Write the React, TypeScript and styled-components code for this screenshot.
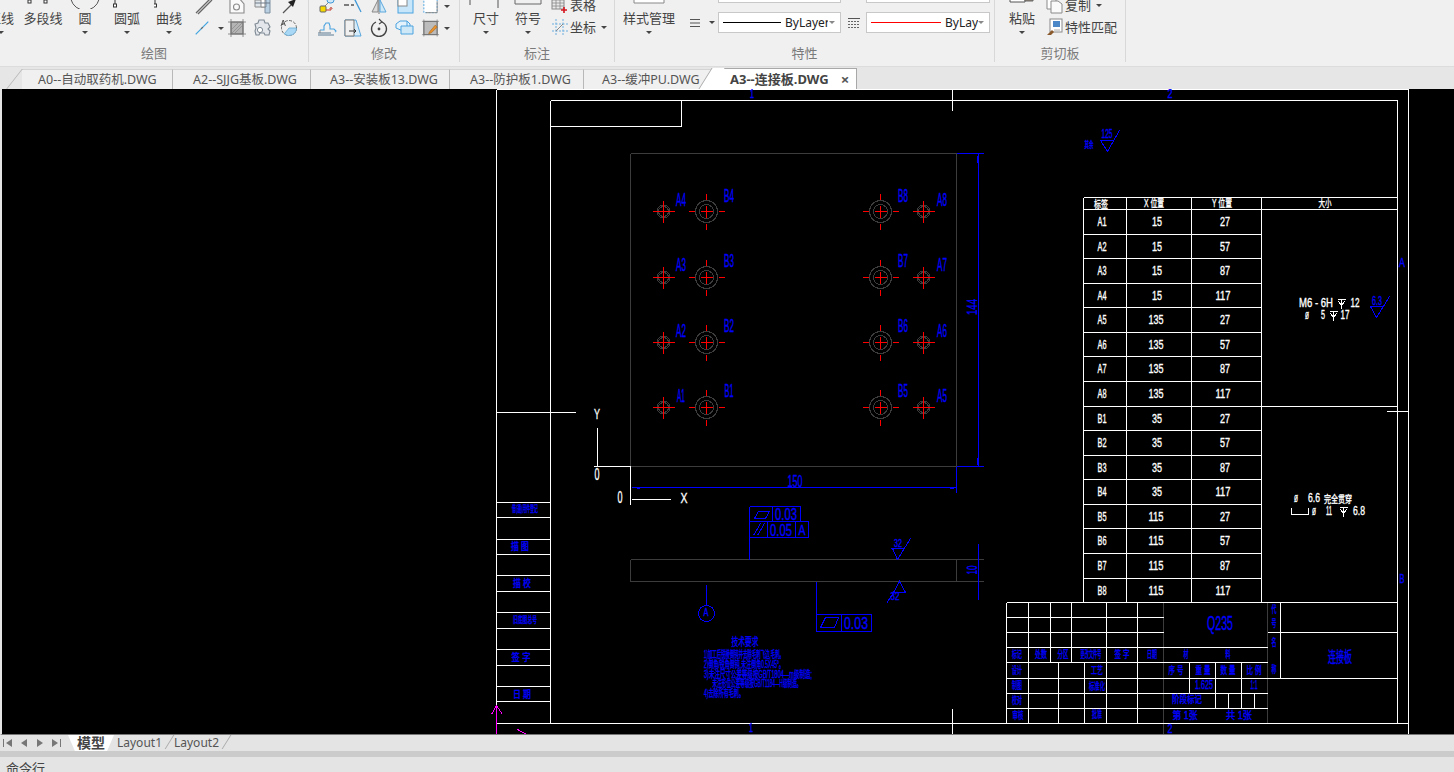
import * as React from "react";
import styled, { createGlobalStyle } from "styled-components";

const UI_FONT = `"Noto Sans", "Noto Sans CJK SC", sans-serif`;
const CAD_FONT = `"Liberation Sans", "Noto Sans CJK SC", sans-serif`;
const BLUE = "#0000ff";
const WHITE = "#ffffff";
const RED = "#ff0000";
const GREY = "#3c3c3c";

const GlobalStyle = createGlobalStyle`
  html, body, #root {
    margin: 0;
    padding: 0;
    height: 100%;
    overflow: hidden;
    background: #f0f0f0;
  }
`;

const Page = styled.div`
  height: 772px;
  width: 1454px;
  display: flex;
  flex-direction: column;
  overflow: hidden;
  font-family: ${UI_FONT};
  color: #444;
`;

/* ---------- ribbon ---------- */

const Ribbon = styled.div`
  height: 66px;
  flex: none;
  display: flex;
  background: #f0f0f0;
  overflow: hidden;
  border-bottom: 1px solid #dcdcdc;
  box-sizing: content-box;
`;

const Group = styled.div<{ $w: number }>`
  width: ${(p) => p.$w}px;
  height: 62px;
  flex: none;
  box-sizing: border-box;
  display: flex;
  flex-direction: column;
  border-right: 1px solid #d8d8d8;
`;

const Tools = styled.div<{ $pad?: number }>`
  height: 50px;
  margin-top: -6px;
  flex: none;
  display: flex;
  padding-left: ${(p) => p.$pad ?? 0}px;
`;

const GroupLabel = styled.div`
  height: 18px;
  line-height: 18px;
  text-align: center;
  font-size: 13px;
  color: #7a7a7a;
`;

const CroppedRun = styled.div`
  display: flex;
  flex: none;
  margin-left: -20px;
`;

const LargeButton = styled.div<{ $w?: number }>`
  width: ${(p) => p.$w ?? 42}px;
  flex: none;
  display: flex;
  flex-direction: column;
  align-items: center;
`;

const LargeIcon = styled.div`
  height: 15px;
  width: 100%;
  overflow: hidden;
  display: flex;
  justify-content: center;
  align-items: flex-end;
`;

const LargeText = styled.div`
  height: 18px;
  line-height: 18px;
  font-size: 13px;
  white-space: nowrap;
  color: #444;
`;

const Caret = styled.span`
  display: inline-block;
  width: 0;
  height: 0;
  border-left: 3px solid transparent;
  border-right: 3px solid transparent;
  border-top: 3px solid #444;
  flex: none;
`;

const LargeCaret = styled(Caret)`
  margin-top: 4px;
`;

const SmallGrid = styled.div<{ $cols: string }>`
  display: grid;
  grid-template-columns: ${(p) => p.$cols};
  grid-auto-rows: 22px;
  margin-top: 1px;
`;

const SmallCell = styled.div`
  display: flex;
  align-items: center;
  justify-content: center;
`;

const CaretCell = styled(SmallCell)<{ $gap: number }>`
  justify-content: flex-start;
  gap: ${(p) => p.$gap}px;
  padding-left: 3px;
`;

const TextRows = styled.div<{ $left: number }>`
  display: flex;
  flex-direction: column;
  margin-left: ${(p) => p.$left}px;
`;

const TextRow = styled.div`
  height: 22px;
  display: flex;
  align-items: center;
  font-size: 13px;
  line-height: 22px;
  white-space: nowrap;
  color: #444;
`;

const RowIcon = styled.span`
  width: 19px;
  flex: none;
  display: flex;
  align-items: center;
`;

const RowCaret = styled(Caret)`
  margin-left: 5px;
`;

const PropsGrid = styled.div`
  display: grid;
  grid-template-columns: 23px 12px 124px 24px 125px;
  grid-template-rows: 21px 21px;
  row-gap: 9px;
  margin-top: -12px;
  flex: none;
  align-items: center;
`;

const Combo = styled.div`
  height: 21px;
  box-sizing: border-box;
  background: #fff;
  border: 1px solid #c8c8c8;
  display: flex;
  align-items: center;
  padding: 0 4px;
  overflow: hidden;
  margin-right: 1px;
`;

const ComboLine = styled.span<{ $w: number; $color: string }>`
  width: ${(p) => p.$w}px;
  height: 1px;
  flex: none;
  background: ${(p) => p.$color};
`;

const ComboText = styled.span<{ $w: number }>`
  width: ${(p) => p.$w}px;
  flex: none;
  overflow: hidden;
  margin-left: 4px;
  font-size: 12px;
  color: #222;
  white-space: nowrap;
`;

const ComboCaret = styled(Caret)`
  border-top-color: #888;
  margin-left: auto;
  margin-right: 1px;
`;

/* ---------- file tabs ---------- */

const TabBar = styled.div`
  height: 22px;
  flex: none;
  background: #e6e6e6;
  display: flex;
  align-items: flex-end;
  padding-left: 22px;
  position: relative;
  &::before {
    content: "";
    position: absolute;
    left: 14px;
    top: 2px;
    width: 8px;
    height: 20px;
    border-left: 1px solid #b8b8b8;
    transform: skewX(-38deg);
  }
`;

const Tab = styled.div<{ $w: number; $pad: number }>`
  width: ${(p) => p.$w}px;
  height: 20px;
  flex: none;
  box-sizing: border-box;
  background: #f0f0f0;
  border-right: 1px solid #b8b8b8;
  border-top: 1px solid #d4d4d4;
  padding-left: ${(p) => p.$pad}px;
  font-size: 12.5px;
  line-height: 19px;
  color: #555;
  white-space: nowrap;
`;

const ActiveTab = styled.div`
  width: 146px;
  height: 21px;
  flex: none;
  box-sizing: border-box;
  position: relative;
  background: #fff;
  border-top: 1px solid #a8a8a8;
  border-right: 1px solid #a8a8a8;
  padding-left: 19px;
  font-size: 13px;
  font-weight: 700;
  line-height: 20px;
  color: #444;
  white-space: nowrap;
  display: flex;
  &::before {
    content: "";
    position: absolute;
    left: -6px;
    top: -1px;
    width: 12px;
    height: 21px;
    background: #fff;
    border-left: 1px solid #a8a8a8;
    transform: skewX(-32deg);
  }
`;

const TabLabel = styled.span`
  position: relative;
`;

const TabClose = styled.span`
  margin-left: 12px;
  font-size: 15px;
  font-weight: 700;
  color: #555;
`;

/* ---------- canvas ---------- */

const Canvas = styled.div`
  height: 646px;
  flex: none;
  background: #000;
  border-left: 2px solid #e4e4e4;
  border-bottom: 1px solid #777;
  box-sizing: border-box;
  overflow: hidden;
`;

const Drawing = styled.svg`
  display: block;
  margin-left: -2px;
  shape-rendering: crispEdges;
`;

/* ---------- layout tabs + command line ---------- */

const LayoutBar = styled.div`
  height: 16px;
  flex: none;
  background: #e4e4e4;
  display: flex;
  align-items: stretch;
`;

const NavArrows = styled.div`
  width: 68px;
  flex: none;
  display: flex;
  align-items: center;
`;

const ModelTab = styled.div`
  width: 46px;
  flex: none;
  background: #fff;
  clip-path: polygon(0 0, 100% 0, 85% 100%, 15% 100%);
  text-align: center;
  font-size: 14px;
  font-weight: 700;
  line-height: 15px;
  color: #444;
`;

const SheetTab = styled.div`
  width: 57px;
  flex: none;
  box-sizing: border-box;
  padding-right: 6px;
  position: relative;
  text-align: center;
  font-size: 12px;
  line-height: 15px;
  color: #555;
  &::after {
    content: "";
    position: absolute;
    right: 1px;
    top: 0;
    height: 14px;
    border-right: 1px solid #aaa;
    transform: skewX(-32deg);
  }
`;

const Gutter = styled.div`
  height: 6px;
  flex: none;
  background: #cbcbcb;
`;

const CommandRow = styled.div`
  height: 15px;
  flex: none;
  background: #e4e4e4;
  padding-left: 6px;
  font-size: 13px;
  line-height: 22px;
  color: #444;
  overflow: hidden;
`;

/* ---------- ribbon icons ---------- */

const Ic: React.FC<{ w?: number; h?: number; vb?: string; children: React.ReactNode }> = ({
  w = 20,
  h = 20,
  vb,
  children,
}) => (
  <svg width={w} height={h} viewBox={vb ?? `0 0 ${w} ${h}`} fill="none">
    {children}
  </svg>
);

const IconHatchLine = () => (
  <Ic>
    <path d="M3 17 17 3M5 18 19 4" stroke="#666" strokeWidth="1.3" />
    <path d="M4 17.5 18 3.5" stroke="#aaa" strokeWidth="1" />
  </Ic>
);
const IconBlueLine = () => (
  <Ic>
    <path d="M3 17 17 3" stroke="#3fa3e0" strokeWidth="1.3" />
    <path d="M9 11l2-2" stroke="#666" strokeWidth="1.3" />
  </Ic>
);
const IconGem = () => (
  <Ic>
    <path d="M3 2h9l5 6v9H3z" stroke="#8a8a8a" strokeWidth="1.1" fill="#fafafa" />
    <circle cx="9.5" cy="11" r="3" stroke="#8a8a8a" strokeWidth="1.1" />
  </Ic>
);
const IconBlocks = () => (
  <Ic>
    <path d="M2 4h12v7H2z" stroke="#8a8a8a" fill="#dfe6ec" />
    <path d="M8 3h4v8H8z" fill="#fff" stroke="#8a8a8a" />
    <path d="M13 3h4v14h-5v-6h1z" fill="#b9cfe2" stroke="#7c8f9f" />
    <path d="M2 7h15" stroke="#6d7b88" />
  </Ic>
);
const IconArrow = () => (
  <Ic>
    <path d="M4 17 13 8" stroke="#555" strokeWidth="1.2" />
    <path d="M9 6l8-3-3 8z" fill="#222" />
  </Ic>
);
const IconHatchSquare = () => (
  <Ic>
    <rect x="4" y="4" width="12" height="12" fill="#b4b4b4" stroke="#666" />
    <path d="M1 4h18M1 16h18M4 1v18M16 1v18" stroke="#777" strokeWidth="0.8" />
    <path d="M5 15 15 5M8 15l7-7M5 11l6-6" stroke="#8d8d8d" strokeWidth="0.8" />
  </Ic>
);
const IconGear = () => (
  <Ic>
    <path
      d="M6 2h5l1 3 3 0 2 4-2 2 2 2-1 4h-4l-1-2H7l-1 2H3l-1-4 1-3-1-4 3-1z"
      fill="#e3e6ea"
      stroke="#7f8a94"
      strokeWidth="1.1"
    />
    <circle cx="7" cy="12" r="2.6" fill="#fff" stroke="#7f8a94" />
  </Ic>
);
const IconArcA = () => (
  <Ic>
    <circle cx="10" cy="10" r="7.5" stroke="#666" strokeDasharray="3 1.4" />
    <path d="M10 10h7.5a7.5 7.5 0 0 1-12.2 5.9z" fill="#a8d8f5" stroke="#6aa9d1" strokeWidth="0.8" />
    <path d="M2 8 4.2 2 6.4 8M3 6h2.4" stroke="#444" strokeWidth="0.9" />
  </Ic>
);
const IconDots = () => (
  <Ic>
    <path d="M11 7 7 11" stroke="#888" />
    <rect x="10" y="1" width="7" height="6" rx="3" fill="#cfe8f8" stroke="#3f98d8" />
    <rect x="3" y="10" width="6" height="6" rx="1" fill="#f5d800" stroke="#666" />
    <path d="M9 14h5v-2" stroke="#c0392b" />
    <path d="M12.5 13l1.5-2 1.5 2" stroke="#c0392b" strokeWidth="0.7" />
  </Ic>
);
const IconTrim = () => (
  <Ic>
    <path d="M1 9h5M8 9h3" stroke="#555" strokeWidth="1.5" />
    <path d="M11 2l7 14" stroke="#3f98d8" strokeWidth="1.3" />
  </Ic>
);
const IconMirror = () => (
  <Ic>
    <path d="M10 1v17" stroke="#888" strokeWidth="1.2" />
    <path d="M9 4 3 16h6z" fill="#dcdcdc" stroke="#888" />
    <path d="M11 4l6 12h-6z" fill="#cfe8f8" stroke="#5aa7dc" />
  </Ic>
);
const IconDoc = () => (
  <Ic>
    <rect x="3" y="2" width="15" height="15" fill="#c7e6fa" stroke="#4aa3df" />
    <rect x="3" y="2" width="9" height="8" fill="#fff" stroke="#888" />
  </Ic>
);
const IconDash = () => (
  <Ic>
    <rect x="3" y="3" width="14" height="14" fill="#fff" stroke="#4aa3df" strokeDasharray="2 1.5" />
    <path d="M5 17h12V5" stroke="#888" />
  </Ic>
);
const IconStretch = () => (
  <Ic>
    <path d="M1 15h13M1 17h16" stroke="#5a7a92" />
    <path d="M3 12h4V8l2-3h3l1 3v3h4l2 2-1 1" stroke="#4aa3df" strokeWidth="1.1" />
    <path d="M3 12v3" stroke="#888" />
  </Ic>
);
const IconScale = () => (
  <Ic>
    <path d="M2 2h11l5 16H2z" fill="#d7ecfa" stroke="#5aa7dc" />
    <path d="M2 2h9v16H2z" fill="#f0f0f0" stroke="#777" />
    <path d="M6 13h7M11 11l2 2-2 2" stroke="#333" />
  </Ic>
);
const IconRotate = () => (
  <Ic>
    <path d="M7 4a7.5 7.5 0 1 0 6 0" stroke="#444" strokeWidth="1.3" />
    <path d="M10 1 13 4l-3 2" stroke="#444" strokeWidth="1.1" />
    <circle cx="10" cy="11" r="1.4" fill="#444" />
  </Ic>
);
const IconCube = () => (
  <Ic>
    <path d="M1 6l4-3h7l3 3v7H8L1 10z" fill="#e4f2fb" stroke="#4aa3df" />
    <path d="M6 8h12v8H6z" fill="#cfe8f8" stroke="#4aa3df" />
    <path d="M12 8V3" stroke="#4aa3df" />
  </Ic>
);
const IconHatchPen = () => (
  <Ic>
    <rect x="3" y="3" width="14" height="14" fill="#bcbcbc" stroke="#666" />
    <path d="M1 3h18M1 17h18M3 1v18M17 1v18" stroke="#777" strokeWidth="0.7" />
    <path d="M9 14l6-7 2 2-6 6-3 1z" fill="#e8912d" stroke="#a3651c" strokeWidth="0.6" />
  </Ic>
);
const IconTable = () => (
  <Ic w={18} h={18}>
    <rect x="1" y="1" width="12" height="12" fill="#e9e9e9" stroke="#888" />
    <path d="M1 4h12M1 7h12M1 10h12M5 1v12M9 1v12" stroke="#888" strokeWidth="0.8" />
    <path d="M13 11v6M10 14h6" stroke="#d4141e" strokeWidth="1.6" />
  </Ic>
);
const IconCoord = () => (
  <Ic w={18} h={18}>
    <path d="M5 1v16M12 1v16M1 6h16M1 13h16" stroke="#6aaede" strokeDasharray="2 1.5" />
    <path d="M5 13 12 6" stroke="#888" />
  </Ic>
);
const IconLineWeight = () => (
  <Ic w={12} h={12}>
    <path d="M1 2.5h10M1 6h10M1 9.5h10" stroke="#555" strokeWidth="1.1" />
  </Ic>
);
const IconLineType = () => (
  <Ic w={14} h={12}>
    <path d="M1 1.5h12" stroke="#555" />
    <path d="M1 4.5h12M1 7.5h12M1 10.5h12" stroke="#666" strokeDasharray="2 1" />
  </Ic>
);
const IconCopy = () => (
  <Ic w={18} h={18}>
    <path d="M1 1h9v12H1z" fill="#fff" stroke="#8a8a8a" />
    <path d="M5 5h7l4 3v9H5z" fill="#fafafa" stroke="#8a8a8a" />
  </Ic>
);
const IconMatch = () => (
  <Ic w={18} h={18}>
    <rect x="4" y="1" width="12" height="13" fill="#fff" stroke="#888" />
    <rect x="7" y="3" width="7" height="6" fill="#4c88c8" />
    <path d="M1 17l5-5 2 2-3 3z" fill="#8a5a2c" />
    <path d="M8 12h6" stroke="#aaa" />
  </Ic>
);

/* the large icons stick out of the top of the shot, only their lower edge shows */
const TopOfCircle = () => (
  <svg width="30" height="12" viewBox="0 0 30 12" fill="none">
    <path d="M1 0a14.5 14.5 0 0 0 28 0" stroke="#555" strokeWidth="1" transform="translate(0 2.5)" />
  </svg>
);
const PolyGrips = () => (
  <svg width="32" height="10" viewBox="0 0 32 10" fill="none">
    <rect x="1" y="1" width="3" height="3" fill="#fff" stroke="#333" />
    <rect x="17" y="1" width="3" height="3" fill="#fff" stroke="#333" />
  </svg>
);
const GripBelow = ({ dx }: { dx: number }) => (
  <svg width="30" height="10" viewBox="0 0 30 10" fill="none">
    <path d={`M${15 + dx} 0v5`} stroke="#333" />
    <rect x={13.5 + dx} y="5" width="3" height="3" fill="#fff" stroke="#333" />
  </svg>
);
const DimStub = () => (
  <svg width="34" height="10" viewBox="0 0 34 10" fill="none">
    <path d="M1 0v6M29 0v9" stroke="#555" />
  </svg>
);
const SymbolStub = () => (
  <svg width="34" height="10" viewBox="0 0 34 10" fill="none">
    <path d="M4 0v5h26V0" stroke="#666" />
  </svg>
);
const StyleStub = () => (
  <svg width="32" height="12" viewBox="0 0 32 12" fill="none">
    <path d="M1 0v6h30V0" stroke="#888" fill="#fff" />
    <path d="M6 2h20" stroke="#6aaede" />
  </svg>
);
const PasteStub = () => (
  <svg width="26" height="13" viewBox="0 0 26 13" fill="none">
    <path d="M1 0v6h15V0" stroke="#555" fill="#fff" />
    <path d="M16 0h8v5h-8z" fill="#8d8272" stroke="#666" />
  </svg>
);

/* ---------- drawing data ---------- */

type Seg = [number, number, number, number];

const toPath = (segs: Seg[]) => segs.map(([a, b, c, d]) => `M${a} ${b}L${c} ${d}`).join("");

const TABLE_ROWS = [197, 209, 234, 258, 283, 307, 332, 356, 381, 406, 430, 455, 479, 504, 528, 553, 578];
const TABLE_DATA: [string, string, string][] = [
  ["A1", "15", "27"],
  ["A2", "15", "57"],
  ["A3", "15", "87"],
  ["A4", "15", "117"],
  ["A5", "135", "27"],
  ["A6", "135", "57"],
  ["A7", "135", "87"],
  ["A8", "135", "117"],
  ["B1", "35", "27"],
  ["B2", "35", "57"],
  ["B3", "35", "87"],
  ["B4", "35", "117"],
  ["B5", "115", "27"],
  ["B6", "115", "57"],
  ["B7", "115", "87"],
  ["B8", "115", "117"],
];

const whiteSegs: Seg[] = [
  // sheet borders
  [496, 89, 1408, 89],
  [496, 89, 496, 735],
  [1408, 89, 1408, 735],
  [550, 100, 1397, 100],
  [550, 100, 550, 723],
  [1397, 100, 1397, 723],
  [550, 723, 1408, 723],
  [496, 723, 550, 723],
  [550, 126, 681, 126],
  [681, 100, 681, 126],
  // centring ticks
  [952, 89, 952, 110],
  [952, 708, 952, 735],
  [496, 412, 575, 412],
  [1386, 411, 1408, 411],
  // ucs icons
  [597, 427, 597, 466],
  [593, 466, 630, 466],
  [630, 466, 630, 504],
  [631, 499, 670, 499],
  // revision column
  ...[502, 517, 539, 554, 575, 591, 612, 628, 649, 665, 686, 701].map((y): Seg => [496, y, 550, y]),
  // hole table
  ...TABLE_ROWS.map((y): Seg => [1083, y, 1261, y]),
  [1261, 197, 1397, 197],
  [1261, 209, 1397, 209],
  [1261, 406, 1397, 406],
  [1083, 197, 1083, 602],
  [1126, 197, 1126, 602],
  [1191, 197, 1191, 602],
  [1261, 197, 1261, 602],
  // title block
  [1006, 602, 1397, 602],
  [1006, 602, 1006, 723],
  [1006, 617, 1163, 617],
  [1006, 632, 1163, 632],
  [1267, 632, 1397, 632],
  [1006, 647, 1267, 647],
  [1006, 662, 1267, 662],
  [1006, 678, 1397, 678],
  [1006, 693, 1267, 693],
  [1006, 708, 1267, 708],
  [1028, 602, 1028, 723],
  [1050, 602, 1050, 662],
  [1071, 602, 1071, 662],
  [1106, 602, 1106, 723],
  [1137, 602, 1137, 723],
  [1058, 662, 1058, 723],
  [1084, 662, 1084, 723],
  [1189, 662, 1189, 693],
  [1215, 662, 1215, 708],
  [1241, 662, 1241, 693],
  [1228, 693, 1228, 708],
  [1241, 693, 1241, 708],
  [1254, 693, 1254, 708],
  [1280, 602, 1280, 678],
  // counterbore bracket
  [1291, 507, 1291, 514],
  [1291, 514, 1308, 514],
  [1308, 507, 1308, 514],
];

const greySegs: Seg[] = [
  [630, 153, 956, 153],
  [630, 153, 630, 466],
  [956, 153, 956, 466],
  [630, 466, 956, 466],
  [630, 559, 956, 559],
  [630, 581, 956, 581],
  [630, 559, 630, 581],
  [956, 559, 956, 581],
  [956, 559, 983, 559],
  [956, 581, 983, 581],
  [1163, 602, 1163, 733],
  [1267, 602, 1267, 723],
];

const blueSegs: Seg[] = [
  // dimensions
  [956, 153, 983, 153],
  [956, 466, 983, 466],
  [978, 153, 978, 466],
  [977, 155, 977, 162],
  [977, 457, 977, 464],
  [631, 487, 956, 487],
  [636, 488, 639, 488],
  [949, 488, 953, 488],
  [956, 466, 956, 492],
  [978, 543, 978, 599],
  // geometric tolerance frames
  [749, 506, 800, 506],
  [749, 521, 808, 521],
  [749, 537, 808, 537],
  [749, 506, 749, 559],
  [772, 506, 772, 521],
  [800, 506, 800, 521],
  [767, 521, 767, 537],
  [795, 521, 795, 537],
  [808, 521, 808, 537],
  [816, 581, 816, 631],
  [816, 614, 871, 614],
  [816, 631, 871, 631],
  [841, 614, 841, 631],
  [871, 614, 871, 631],
  [706, 584, 706, 605],
];

const blueShapes = [
  // flatness and parallel symbols
  "M754 518L765 518L769 511L758 511Z",
  "M753 535L760 523M757 535L764 523",
  "M820 627L834 627L838 617L825 617Z",
  // roughness marks
  "M890 548L904 548M892 548L897 559L910 538",
  "M893 592L905 592M905 592L899 581L893 592L886 603",
  "M1100 140L1113 140M1100 140L1107 151L1119 130",
  "M1370 306L1383 306M1370 306L1376 317L1389 296",
];

const holeRows = [211, 277, 342, 407];
const holeCols: [number, boolean][] = [
  [663, false],
  [706, true],
  [880, true],
  [923, false],
];

const Hole: React.FC<{ cx: number; cy: number; big: boolean }> = ({ cx, cy, big }) => {
  const stroke = GREY;
  const red = big
    ? `M${cx - 18} ${cy}H${cx - 12}M${cx - 6} ${cy}H${cx + 6}M${cx + 12} ${cy}H${cx + 18}` +
      `M${cx} ${cy - 18}V${cy - 12}M${cx} ${cy - 6}V${cy + 6}M${cx} ${cy + 12}V${cy + 18}`
    : `M${cx - 11} ${cy}H${cx + 11}M${cx} ${cy - 11}V${cy + 11}`;
  return (
    <g>
      <circle cx={cx} cy={cy} r={big ? 11 : 6.5} stroke={stroke} fill="none" />
      <circle cx={cx} cy={cy} r={big ? 7 : 5} stroke={stroke} fill="none" />
      <path d={red} stroke={RED} fill="none" />
    </g>
  );
};

/* text on the drawing: centre point, squeezed width, font size */
type Label = [string, number, number, number, number];

const CadText = styled.text`
  font-family: ${CAD_FONT};
  text-anchor: middle;
  dominant-baseline: central;
  shape-rendering: auto;
  stroke-width: 0.35px;
`;

const blueLabels: Label[] = [
  ["A4", 681, 200, 10, 18],
  ["A3", 681, 265, 10, 18],
  ["A2", 681, 331, 10, 18],
  ["A1", 681, 396, 8, 18],
  ["B4", 729, 196, 10, 18],
  ["B3", 729, 261, 10, 18],
  ["B2", 729, 326, 10, 18],
  ["B1", 729, 391, 9, 18],
  ["B8", 903, 196, 10, 18],
  ["B7", 903, 261, 10, 18],
  ["B6", 903, 326, 10, 18],
  ["B5", 903, 391, 10, 18],
  ["A8", 942, 200, 10, 18],
  ["A7", 942, 265, 10, 18],
  ["A6", 942, 331, 10, 18],
  ["A5", 942, 396, 10, 18],
  ["1", 752, 94, 4, 12],
  ["1", 751, 728, 4, 12],
  ["2", 1170, 94, 5, 12],
  ["2", 1170, 729, 5, 12],
  ["A", 1402, 262, 6, 13],
  ["B", 1402, 578, 5, 13],
  ["150", 795, 481, 15, 16],
  ["0.03", 786, 514, 22, 16],
  ["0.05", 781, 530, 22, 16],
  ["A", 802, 530, 7, 14],
  ["0.03", 856, 623, 24, 16],
  ["A", 706, 612, 5, 10],
  ["32", 898, 543, 8, 11],
  ["32", 895, 596, 9, 11],
  ["125", 1107, 134, 11, 12],
  ["其余", 1089, 145, 9, 9],
  ["6.3", 1377, 301, 10, 12],
  ["技术要求", 745, 642, 27, 11],
  ["1)加工后锐棱倒钝并去除毛刺飞边,毛刺。", 744, 654, 80, 10],
  ["2)倒角/锐角倒钝,未注倒角0.5X45°。", 744, 664, 80, 10],
  ["3)未注尺寸公差等级按GB/T1804—m级制造;", 758, 674, 108, 10],
  ["未注形位公差等级按GB/T1184—H级制造。", 757, 683, 89, 10],
  ["4)去除所有毛刺。", 724, 693, 40, 10],
  ["借(通)用件登记", 525, 509, 26, 9],
  ["描  图", 520, 546, 18, 10],
  ["描  校", 522, 583, 18, 10],
  ["旧底图总号", 525, 620, 24, 9],
  ["签  字", 521, 657, 19, 10],
  ["日  期", 522, 694, 18, 10],
  ["标记", 1017, 654, 10, 10],
  ["处数", 1041, 654, 12, 10],
  ["分区", 1063, 654, 11, 10],
  ["更改文件号", 1091, 654, 21, 10],
  ["签  字", 1122, 654, 15, 10],
  ["日期", 1152, 654, 10, 10],
  ["材", 1186, 654, 5, 10],
  ["料", 1228, 654, 5, 10],
  ["设计", 1017, 670, 10, 10],
  ["工艺", 1097, 670, 12, 10],
  ["序  号", 1176, 670, 15, 10],
  ["重  量", 1203, 670, 15, 10],
  ["数  量", 1228, 670, 15, 10],
  ["比  例", 1254, 670, 15, 10],
  ["制图", 1017, 685, 10, 10],
  ["标准化", 1097, 686, 16, 10],
  ["1.625", 1204, 685, 18, 12],
  ["1:1", 1254, 685, 7, 12],
  ["校对", 1017, 700, 10, 10],
  ["阶段标记", 1187, 699, 30, 10],
  ["审核", 1018, 715, 11, 10],
  ["批准", 1097, 714, 10, 10],
  ["第  1张", 1185, 715, 25, 10],
  ["共  1张", 1239, 715, 26, 10],
  ["Q235", 1220, 623, 26, 20],
  ["连接板", 1340, 656, 24, 15],
  ["代", 1274, 609, 5, 10],
  ["号", 1274, 623, 5, 10],
  ["名", 1274, 642, 5, 10],
  ["称", 1274, 669, 5, 10],
];

const whiteLabels: Label[] = [
  ["Y", 597, 413, 6, 15],
  ["0", 597, 474, 5, 16],
  ["0", 620, 497, 5, 16],
  ["X", 684, 497, 7, 15],
  ["标签", 1101, 204, 14, 10],
  ["X 位置", 1154, 203, 20, 10],
  ["Y 位置", 1222, 203, 20, 10],
  ["大小", 1325, 203, 13, 10],
  ["M6 - 6H", 1316, 303, 34, 12],
  ["12", 1355, 303, 9, 12],
  ["ø", 1307, 315, 4, 12],
  ["5", 1323, 315, 4, 12],
  ["17", 1345, 315, 9, 12],
  ["ø", 1296, 498, 4, 12],
  ["6.6", 1314, 498, 12, 12],
  ["完全贯穿", 1338, 499, 28, 10],
  ["ø", 1314, 511, 4, 12],
  ["11", 1329, 511, 6, 12],
  ["6.8", 1359, 511, 12, 12],
];

TABLE_DATA.forEach((row, i) => {
  const top = TABLE_ROWS[i + 1];
  const bottom = i + 2 < TABLE_ROWS.length ? TABLE_ROWS[i + 2] : 602;
  const mid = (top + bottom) / 2 + 0.5;
  whiteLabels.push([row[0], 1102, mid, 9, 12]);
  whiteLabels.push([row[1], row[1].length === 3 ? 1156 : 1157, mid, row[1].length * 5, 12]);
  whiteLabels.push([row[2], row[2].length === 3 ? 1223 : 1225, mid, row[2].length * 5, 12]);
});

const renderLabels = (labels: Label[], fill: string) =>
  labels.map(([text, x, y, w, size], i) => (
    <CadText
      key={`${fill}-${i}`}
      x={x}
      y={y}
      fontSize={size}
      fill={fill}
      stroke={fill}
      textLength={w}
      lengthAdjust="spacingAndGlyphs"
    >
      {text}
    </CadText>
  ));

const depthMarks: [number, number][] = [
  [1341, 303],
  [1333, 315],
  [1343, 511],
];

const CadDrawing = () => (
  <Drawing width="1454" height="646" viewBox="0 89 1454 646" fill="none">
    <g transform="translate(0.5 0.5)">
      <path d={toPath(greySegs)} stroke={GREY} />
      <path d={toPath(whiteSegs)} stroke={WHITE} />
      <path d={toPath(blueSegs)} stroke={BLUE} />
      {blueShapes.map((d) => (
        <path key={d} d={d} stroke={BLUE} />
      ))}
      <circle cx={706} cy={613} r={8} stroke={BLUE} />
      {holeRows.map((cy) =>
        holeCols.map(([cx, big]) => <Hole key={`${cx}-${cy}`} cx={cx} cy={cy} big={big} />)
      )}
      {depthMarks.map(([x, y]) => (
        <path
          key={`${x}-${y}`}
          d={`M${x - 4} ${y - 4}H${x + 4}M${x - 3} ${y - 2}L${x} ${y + 2}L${x + 3} ${y - 2}M${x} ${y - 4}V${y + 5}`}
          stroke={WHITE}
        />
      ))}
      <path d="M496 705V735M496 705L491 714M496 705L502 714M517 729L526 734" stroke="#ff00ff" />
    </g>
    {renderLabels(blueLabels, BLUE)}
    {renderLabels(whiteLabels, WHITE)}
    <CadText x={972} y={307} fontSize={14} fill={BLUE} stroke={BLUE} textLength={16} lengthAdjust="spacingAndGlyphs" transform="rotate(-90 972 307)">
      144
    </CadText>
    <CadText x={972} y={570} fontSize={14} fill={BLUE} stroke={BLUE} textLength={9} lengthAdjust="spacingAndGlyphs" transform="rotate(-90 972 570)">
      10
    </CadText>
  </Drawing>
);

const NavIcon = ({ d }: { d: string }) => (
  <svg width="16" height="10" viewBox="0 0 16 10">
    <path d={d} fill="#777" />
  </svg>
);

const FILE_TABS = [
  { name: "A0--自动取药机.DWG", w: 151, pad: 16 },
  { name: "A2--SJJG基板.DWG", w: 138, pad: 20 },
  { name: "A3--安装板13.DWG", w: 139, pad: 19 },
  { name: "A3--防护板1.DWG", w: 134, pad: 20 },
  { name: "A3--缓冲PU.DWG", w: 127, pad: 18 },
];

export default function App() {
  return (
    <Page>
      <GlobalStyle />
      <Ribbon>
        <Group $w={309}>
          <Tools>
            <CroppedRun>
              <LargeButton>
                <LargeIcon />
                <LargeText>直线</LargeText>
                <LargeCaret />
              </LargeButton>
              <LargeButton>
                <LargeIcon>
                  <PolyGrips />
                </LargeIcon>
                <LargeText>多段线</LargeText>
              </LargeButton>
              <LargeButton>
                <LargeIcon>
                  <TopOfCircle />
                </LargeIcon>
                <LargeText>圆</LargeText>
                <LargeCaret />
              </LargeButton>
              <LargeButton>
                <LargeIcon>
                  <GripBelow dx={-12} />
                </LargeIcon>
                <LargeText>圆弧</LargeText>
                <LargeCaret />
              </LargeButton>
              <LargeButton>
                <LargeIcon>
                  <GripBelow dx={-14} />
                </LargeIcon>
                <LargeText>曲线</LargeText>
                <LargeCaret />
              </LargeButton>
            </CroppedRun>
            <SmallGrid $cols="34px 26px 26px 26px">
              <CaretCell $gap={7}>
                <IconHatchLine />
              </CaretCell>
              <SmallCell>
                <IconGem />
              </SmallCell>
              <SmallCell>
                <IconBlocks />
              </SmallCell>
              <SmallCell>
                <IconArrow />
              </SmallCell>
              <CaretCell $gap={7}>
                <IconBlueLine />
                <Caret />
              </CaretCell>
              <SmallCell>
                <IconHatchSquare />
              </SmallCell>
              <SmallCell>
                <IconGear />
              </SmallCell>
              <SmallCell>
                <IconArcA />
              </SmallCell>
            </SmallGrid>
          </Tools>
          <GroupLabel>绘图</GroupLabel>
        </Group>

        <Group $w={151}>
          <Tools $pad={5}>
            <SmallGrid $cols="26px 26px 26px 26px 32px">
              <SmallCell>
                <IconDots />
              </SmallCell>
              <SmallCell>
                <IconTrim />
              </SmallCell>
              <SmallCell>
                <IconMirror />
              </SmallCell>
              <SmallCell>
                <IconDoc />
              </SmallCell>
              <CaretCell $gap={4}>
                <IconDash />
                <Caret />
              </CaretCell>
              <SmallCell>
                <IconStretch />
              </SmallCell>
              <SmallCell>
                <IconScale />
              </SmallCell>
              <SmallCell>
                <IconRotate />
              </SmallCell>
              <SmallCell>
                <IconCube />
              </SmallCell>
              <CaretCell $gap={4}>
                <IconHatchPen />
                <Caret />
              </CaretCell>
            </SmallGrid>
          </Tools>
          <GroupLabel>修改</GroupLabel>
        </Group>

        <Group $w={155}>
          <Tools $pad={5}>
            <LargeButton>
              <LargeIcon>
                <DimStub />
              </LargeIcon>
              <LargeText>尺寸</LargeText>
              <LargeCaret />
            </LargeButton>
            <LargeButton>
              <LargeIcon>
                <SymbolStub />
              </LargeIcon>
              <LargeText>符号</LargeText>
              <LargeCaret />
            </LargeButton>
            <TextRows $left={2}>
              <TextRow>
                <RowIcon>
                  <IconTable />
                </RowIcon>
                表格
              </TextRow>
              <TextRow>
                <RowIcon>
                  <IconCoord />
                </RowIcon>
                坐标
                <RowCaret />
              </TextRow>
            </TextRows>
          </Tools>
          <GroupLabel>标注</GroupLabel>
        </Group>

        <Group $w={380}>
          <Tools>
            <LargeButton $w={68}>
              <LargeIcon>
                <StyleStub />
              </LargeIcon>
              <LargeText>样式管理</LargeText>
              <LargeCaret />
            </LargeButton>
            <PropsGrid>
              <span />
              <span />
              <Combo />
              <span />
              <Combo />
              <SmallCell>
                <IconLineWeight />
              </SmallCell>
              <SmallCell>
                <Caret />
              </SmallCell>
              <Combo>
                <ComboLine $w={58} $color="#000" />
                <ComboText $w={43}>ByLayer</ComboText>
                <ComboCaret />
              </Combo>
              <SmallCell>
                <IconLineType />
              </SmallCell>
              <Combo>
                <ComboLine $w={70} $color={RED} />
                <ComboText $w={33}>ByLayer</ComboText>
                <ComboCaret />
              </Combo>
            </PropsGrid>
          </Tools>
          <GroupLabel>特性</GroupLabel>
        </Group>

        <Group $w={131}>
          <Tools $pad={6}>
            <LargeButton>
              <LargeIcon>
                <PasteStub />
              </LargeIcon>
              <LargeText>粘贴</LargeText>
              <LargeCaret />
            </LargeButton>
            <TextRows $left={3}>
              <TextRow>
                <RowIcon>
                  <IconCopy />
                </RowIcon>
                复制
                <RowCaret />
              </TextRow>
              <TextRow>
                <RowIcon>
                  <IconMatch />
                </RowIcon>
                特性匹配
              </TextRow>
            </TextRows>
          </Tools>
          <GroupLabel>剪切板</GroupLabel>
        </Group>
      </Ribbon>

      <TabBar>
        {FILE_TABS.map((t) => (
          <Tab key={t.name} $w={t.w} $pad={t.pad}>
            {t.name}
          </Tab>
        ))}
        <ActiveTab>
          <TabLabel>A3--连接板.DWG</TabLabel>
          <TabClose>×</TabClose>
        </ActiveTab>
      </TabBar>

      <Canvas>
        <CadDrawing />
      </Canvas>

      <LayoutBar>
        <NavArrows>
          <NavIcon d="M3 1h1v8H3zM12 1v8L6 5z" />
          <NavIcon d="M11 1v8L5 5z" />
          <NavIcon d="M5 1v8l6-4z" />
          <NavIcon d="M4 1v8l6-4zM12 1h1v8h-1z" />
        </NavArrows>
        <ModelTab>模型</ModelTab>
        <SheetTab>Layout1</SheetTab>
        <SheetTab>Layout2</SheetTab>
      </LayoutBar>
      <Gutter />
      <CommandRow>命令行</CommandRow>
    </Page>
  );
}
